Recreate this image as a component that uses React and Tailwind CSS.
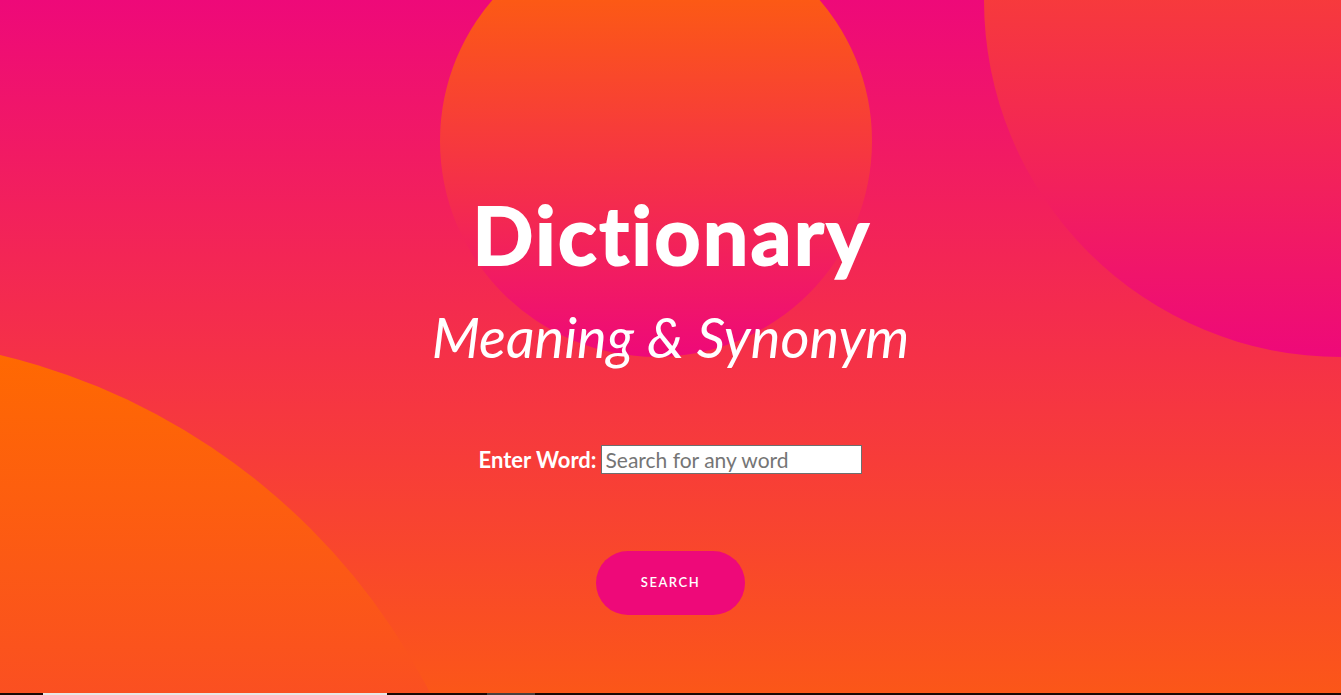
import React from "react";

export default function App() {
  return (
    <div className="relative h-[695px] w-full overflow-hidden bg-[linear-gradient(180deg,#ee0979_0%,#ff6a00_125%)] font-['Lato',sans-serif]">
      {/* decorative circles */}
      <div className="absolute left-[440px] top-[-75px] h-[432px] w-[432px] rounded-full bg-[linear-gradient(180deg,#ff6a00,#ee0979)]" />
      <div className="absolute left-[984px] top-[-357px] h-[714px] w-[714px] rounded-full bg-[linear-gradient(180deg,#ff6a00,#ee0979)]" />
      <div className="absolute left-[-806px] top-[337px] h-[1308px] w-[1308px] rounded-full bg-[linear-gradient(180deg,#ff6a00,#ee0979)]" />

      <div className="relative z-10 flex flex-col items-center pt-[194px] text-white">
        <h1 className="pl-[2.6px] text-[80px] font-bold leading-none tracking-[2.6px] [font-variant-ligatures:none] [-webkit-text-stroke:2px_white]">
          Dictionary
        </h1>
        <h2 className="mt-[35px] text-[56px] font-normal italic leading-none">Meaning &amp; Synonym</h2>

        <div className="mt-[80px] flex items-center gap-[5px]">
          <label className="text-[22px] font-bold leading-none">Enter Word:</label>
          <input
            type="text"
            placeholder="Search for any word"
            className="box-border h-[29px] w-[261px] border border-solid border-[#6e6e6e] bg-white px-[3px] text-[21px] text-black placeholder:text-[#757575] outline-none"
          />
        </div>

        <button className="mt-[77px] h-[64px] w-[149px] rounded-full bg-[#ee0979] text-[13px] font-semibold tracking-[1.5px] text-white">
          SEARCH
        </button>
      </div>

      {/* bottom edge of the next section */}
      <div className="absolute bottom-0 left-0 flex h-[2px] w-full bg-[#1a0804]">
        <div className="ml-[43px] w-[344px] bg-[#e8e8e8]" />
        <div className="ml-[100px] w-[48px] bg-[#4a3f3d]" />
      </div>
    </div>
  );
}
